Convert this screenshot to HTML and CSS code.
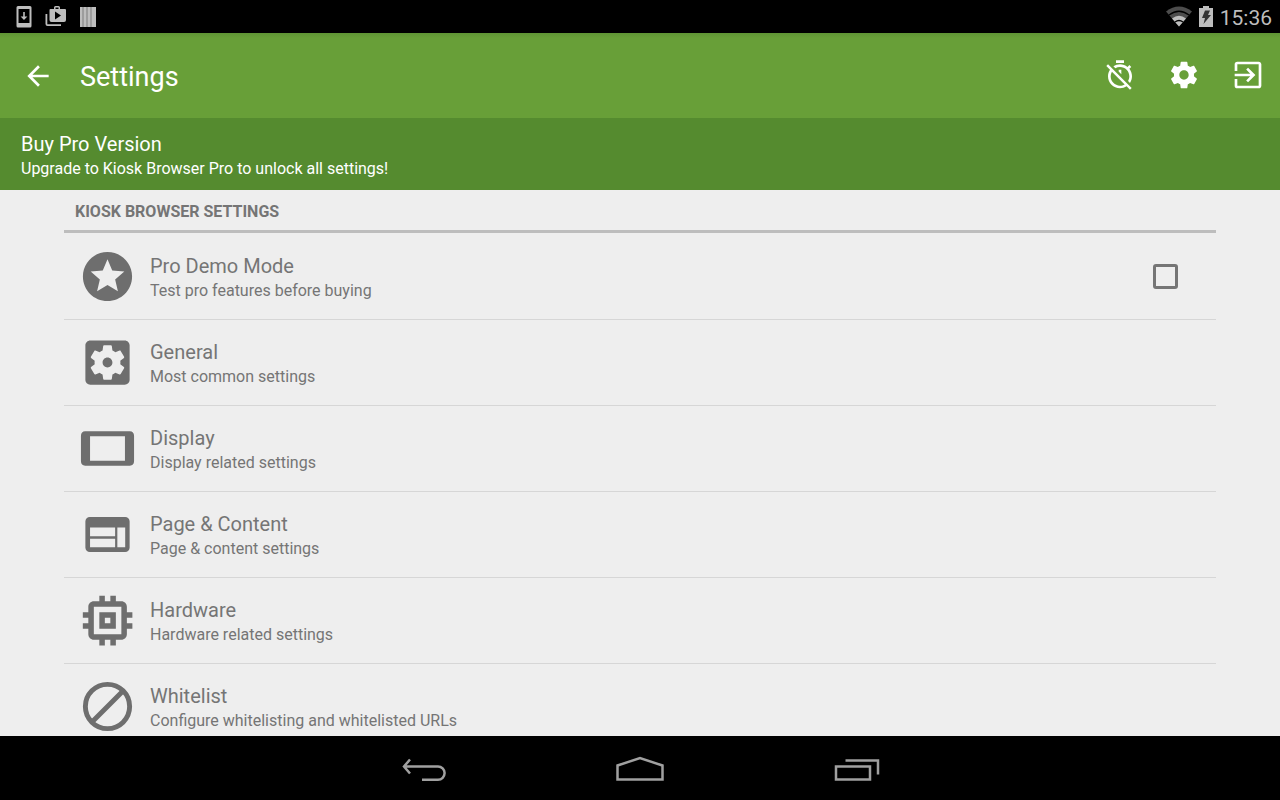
FILE: index.html
```html
<!DOCTYPE html>
<html lang="en">
<head>
    <meta charset="UTF-8">
    <meta name="viewport" content="width=device-width, initial-scale=1.0">
    <title>Settings</title>
    <link rel="stylesheet" href="styles.css">
</head>
<body>
    <div class="status-bar">
        <div class="status-icons">
            <svg width="16" height="22" viewBox="0 0 16 22">
                <path fill-rule="evenodd" d="M2 0h12a1.5 1.5 0 0 1 1.500 1.500v18.500a1.500 1.500 0 0 1-1.500 1.500H2A1.500 1.500 0 0 1 .5 20V1.500A1.500 1.500 0 0 1 2 0zM2.500 3v14h11V3z"/>
                <path d="M7.200 6h1.600v4.500h2.600L8 14l-3.400-3.500h2.600z"/>
            </svg>
            <svg width="22" height="22" viewBox="0 0 22 22">
                <path fill-rule="evenodd" d="M5.500 3H9V1.500Q9 0 10.500 0h3Q15 0 15 1.500V3h5q1 0 1 1v10q0 2-2 2H6.500q-2 0-2-2V4q0-1 1-1zm5-1.500V3h3V1.500zM10 5.500v8l6-4z"/>
                <path d="M.5 8h1.800v10.300H16V20H2.500q-2 0-2-2z"/>
            </svg>
            <svg width="16" height="22" viewBox="0 0 16 22">
                <path fill="#7d7d7d" d="M0 1h16v20H0z"/>
                <path d="M0 1h2.500v20H0zM3.500 1h3v20h-3zM7.500 1h3v20h-3zM11.500 1h4.500v20h-4.500z"/>
            </svg>
        </div>
        <div class="status-system">
            <svg width="26" height="22" viewBox="0 0 26 22">
                <path fill="#4d4d4d" d="M0 5.500Q13-4.500 26 5.500L13 20.500z"/>
                <path d="M6 12.500q7-5.500 14 0l-7 8z"/>
                <path fill="none" stroke="#000" stroke-width="1.300" d="M3 9q10-7.500 20 0M9 16q4-3 8 0"/>
            </svg>
            <svg width="14" height="22" viewBox="0 0 14 22">
                <path d="M4 0h6v2h4v19H0V2h4z"/>
                <path fill="#333" d="M6 4.500h5L9 9h3l-7.500 9L6 12H3z"/>
            </svg>
            <span class="clock">15:36</span>
        </div>
    </div>

    <header class="toolbar">
        <button class="back" type="button" aria-label="Back">
            <svg viewBox="0 0 24 24"><path d="M20 11H7.830l5.590-5.590L12 4l-8 8 8 8 1.410-1.410L7.830 13H20v-2z"/></svg>
        </button>
        <h1>Settings</h1>
        <div class="actions">
            <button type="button" aria-label="Timer off">
                <svg viewBox="0 0 24 24"><path d="M19.040 4.550l-1.420 1.420C16.070 4.740 14.120 4 12 4c-1.830 0-3.530.55-4.950 1.480l1.460 1.460C9.530 6.350 10.730 6 12 6c3.870 0 7 3.130 7 7 0 1.270-.35 2.470-.94 3.490l1.450 1.450C20.450 16.530 21 14.830 21 13c0-2.120-.74-4.070-1.970-5.610l1.420-1.420-1.410-1.420zM15 1H9v2h6V1zm-4 8.440l2 2V8h-2v1.440zM3.020 4L1.750 5.270 4.500 8.030C3.550 9.450 3 11.160 3 13c0 4.970 4.020 9 9 9 1.840 0 3.550-.55 4.980-1.500l2.500 2.500 1.270-1.270-7.710-7.710L3.020 4zM12 20c-3.870 0-7-3.130-7-7 0-1.280.35-2.480.95-3.520l9.560 9.560c-1.030.61-2.230.96-3.510.96z"/></svg>
            </button>
            <button type="button" aria-label="Settings">
                <svg viewBox="0 0 24 24"><path d="M19.430 12.980c.04-.32.07-.64.07-.98s-.03-.66-.07-.98l2.110-1.650c.19-.15.24-.42.12-.64l-2-3.460c-.12-.22-.39-.3-.61-.22l-2.490 1c-.52-.4-1.080-.73-1.690-.98l-.38-2.650C14.460 2.180 14.250 2 14 2h-4c-.25 0-.46.18-.49.42l-.38 2.650c-.61.25-1.170.59-1.690.98l-2.490-1c-.23-.09-.49 0-.61.22l-2 3.460c-.13.22-.07.49.12.64l2.110 1.650c-.04.32-.07.65-.07.98s.03.66.07.98l-2.110 1.650c-.19.15-.24.42-.12.64l2 3.460c.12.22.39.3.61.22l2.490-1c.52.4 1.080.73 1.690.98l.38 2.650c.03.24.24.42.49.42h4c.25 0 .46-.18.49-.42l.38-2.650c.61-.25 1.170-.59 1.690-.98l2.490 1c.23.09.49 0 .61-.22l2-3.460c.12-.22.07-.49-.12-.64l-2.110-1.650zM12 15.500c-1.930 0-3.500-1.570-3.500-3.500s1.570-3.500 3.500-3.500 3.500 1.570 3.500 3.500-1.570 3.500-3.500 3.500z"/></svg>
            </button>
            <button type="button" aria-label="Exit">
                <svg viewBox="0 0 24 24"><path d="M10.640 16.090L12.050 17.500l5.500-5.500-5.500-5.500-1.410 1.410L13.670 11H2v2h11.670zM20 2H4a2 2 0 0 0-2 2v5h2V4h16v16H4v-5H2v5a2 2 0 0 0 2 2h16c1.100 0 2-.9 2-2V4c0-1.100-.9-2-2-2z"/></svg>
            </button>
        </div>
    </header>

    <a class="banner" href="#">
        <span class="title">Buy Pro Version</span>
        <span class="summary">Upgrade to Kiosk Browser Pro to unlock all settings!</span>
    </a>

    <main>
        <h2>Kiosk Browser Settings</h2>
        <ul class="settings">
            <li>
                <label class="row" for="demoMode">
                    <svg viewBox="0 0 24 24"><path d="M11.990 2C6.470 2 2 6.480 2 12s4.470 10 9.990 10C17.520 22 22 17.520 22 12S17.520 2 11.990 2zm4.240 16L12 15.450 7.770 18l1.120-4.810-3.730-3.230 4.920-.42L12 5l1.920 4.530 4.920.42-3.730 3.230L16.230 18z"/></svg>
                    <span class="text">
                        <span class="title">Pro Demo Mode</span>
                        <span class="summary">Test pro features before buying</span>
                    </span>
                    <input id="demoMode" type="checkbox">
                </label>
            </li>
            <li>
                <a class="row" href="#">
                    <svg viewBox="0 0 24 24"><path d="M12 10c-1.100 0-2 .9-2 2s.9 2 2 2 2-.9 2-2-.9-2-2-2zm7-7H5c-1.110 0-2 .9-2 2v14c0 1.100.89 2 2 2h14c1.110 0 2-.9 2-2V5c0-1.100-.89-2-2-2zm-1.750 9c0 .23-.02.46-.05.68l1.480 1.160c.13.11.17.3.08.45l-1.400 2.420c-.09.15-.27.21-.43.15l-1.740-.7c-.36.28-.76.51-1.180.69l-.26 1.850c-.03.17-.18.3-.35.3h-2.800c-.17 0-.32-.13-.35-.29l-.26-1.850c-.43-.18-.82-.41-1.180-.69l-1.740.7c-.16.06-.34 0-.43-.15l-1.400-2.420c-.09-.15-.05-.34.08-.45l1.480-1.160c-.03-.23-.05-.46-.05-.69s.02-.46.05-.68l-1.480-1.160c-.13-.11-.17-.3-.08-.45l1.400-2.420c.09-.15.27-.21.43-.15l1.740.7c.36-.28.76-.51 1.180-.69l.26-1.850c.03-.17.18-.3.35-.3h2.800c.17 0 .32.13.35.29l.26 1.850c.43.18.82.41 1.180.69l1.740-.7c.16-.06.34 0 .43.15l1.400 2.420c.09.15.05.34-.08.45l-1.480 1.160c.03.23.05.46.05.69z"/></svg>
                    <span class="text">
                        <span class="title">General</span>
                        <span class="summary">Most common settings</span>
                    </span>
                </a>
            </li>
            <li>
                <a class="row" href="#">
                    <svg viewBox="0 0 24 24"><path fill-rule="evenodd" d="M2.900 5h18.200a1.800 1.800 0 0 1 1.700 1.700v10.600a1.800 1.800 0 0 1-1.700 1.700H2.900a1.800 1.800 0 0 1-1.700-1.700V6.700A1.800 1.800 0 0 1 2.900 5zM4.900 7v10h14.200V7z"/></svg>
                    <span class="text">
                        <span class="title">Display</span>
                        <span class="summary">Display related settings</span>
                    </span>
                </a>
            </li>
            <li>
                <a class="row" href="#">
                    <svg viewBox="0 0 24 24"><path fill-rule="evenodd" d="M4.800 4.900h14.400A1.800 1.800 0 0 1 21 6.700v10.600a1.800 1.800 0 0 1-1.800 1.800H4.800A1.800 1.800 0 0 1 3 17.300V6.700A1.800 1.800 0 0 1 4.800 4.900zM4.900 9.200v3.500h10.200V9.200zM4.900 13.700v3.500h10.200v-3.500zM16 9.200v8h3.200v-8z"/></svg>
                    <span class="text">
                        <span class="title">Page &amp; Content</span>
                        <span class="summary">Page &amp; content settings</span>
                    </span>
                </a>
            </li>
            <li>
                <a class="row" href="#">
                    <svg viewBox="0 0 24 24"><path transform="translate(-1.400 -1.400) scale(1.120)" d="M15 9H9v6h6V9zm-2 4h-2v-2h2v2zm8-2V9h-2V7c0-1.100-.9-2-2-2h-2V3h-2v2h-2V3H9v2H7c-1.100 0-2 .9-2 2v2H3v2h2v2H3v2h2v2c0 1.100.9 2 2 2h2v2h2v-2h2v2h2v-2h2c1.100 0 2-.9 2-2v-2h2v-2h-2v-2h2zm-4 6H7V7h10v10z"/></svg>
                    <span class="text">
                        <span class="title">Hardware</span>
                        <span class="summary">Hardware related settings</span>
                    </span>
                </a>
            </li>
            <li>
                <a class="row" href="#">
                    <svg viewBox="0 0 24 24"><path fill="none" stroke="#6e6e6e" stroke-width="2" d="M12 3a9 9 0 1 0 0 18 9 9 0 0 0 0-18zM5.300 18.700L18.700 5.300"/></svg>
                    <span class="text">
                        <span class="title">Whitelist</span>
                        <span class="summary">Configure whitelisting and whitelisted URLs</span>
                    </span>
                </a>
            </li>
        </ul>
    </main>

    <nav class="nav-bar">
        <button type="button" aria-label="Back">
            <svg width="48" height="32" viewBox="0 0 48 32"><path d="M10 5.500L4 12.500l6 7M4 12.500h34a6.600 6.600 0 0 1 0 13.200H22"/></svg>
        </button>
        <button type="button" aria-label="Home">
            <svg width="48" height="32" viewBox="0 0 48 32"><path d="M1.500 25.500V11.500L24 4l22.500 7.500v14z"/></svg>
        </button>
        <button type="button" aria-label="Recent apps">
            <svg width="48" height="32" viewBox="0 0 48 32"><path d="M4 12.500h34v13H4zM13.500 6.500H46v14"/></svg>
        </button>
    </nav>
</body>
</html>
```
FILE: styles.css
```css
* {
    box-sizing: border-box;
}

body {
    font-family: Roboto, sans-serif;
    background: #eeeeee;
    color: #757575;
    margin: 0;
    height: 100vh;
    display: flex;
    flex-direction: column;
    overflow: hidden;
}

h1, h2, ul {
    margin: 0;
    padding: 0;
}

a {
    color: inherit;
    text-decoration: none;
}

button {
    background: none;
    border: none;
    padding: 0;
    display: flex;
    align-items: center;
    justify-content: center;
    cursor: pointer;
}

/* status bar */
.status-bar {
    background: #000000;
    flex: none;
    height: 33px;
    padding: 0 8px 0 16px;
    display: flex;
    align-items: center;
    justify-content: space-between;
}

.status-bar svg {
    fill: #bebebe;
}

.status-icons {
    display: flex;
    align-items: center;
    gap: 13px;
}

.status-system {
    display: flex;
    align-items: center;
    gap: 7px;
}

.clock {
    color: #bebebe;
    font-size: 21px;
    line-height: 32px;
    padding-top: 2px;
}

/* toolbar */
.toolbar {
    background: linear-gradient(#5f9434, #689f38 5px);
    flex: none;
    height: 85px;
    display: flex;
    align-items: center;
}

.toolbar svg {
    width: 32px;
    height: 32px;
    fill: #ffffff;
}

.toolbar button {
    width: 64px;
    height: 64px;
}

.toolbar .back {
    width: 76px;
}

h1 {
    flex: 1;
    color: #ffffff;
    font-size: 27px;
    font-weight: 400;
    line-height: 32px;
    padding: 2px 0 0 4px;
}

.actions {
    display: flex;
    padding-bottom: 1px;
}

/* pro banner */
.banner {
    background: #558b2f;
    color: #ffffff;
    flex: none;
    height: 72px;
    padding: 4px 21px 0;
    display: flex;
    flex-direction: column;
    justify-content: center;
}

.title,
.summary {
    display: block;
}

.title {
    font-size: 20px;
    line-height: 26px;
}

.summary {
    font-size: 16px;
    line-height: 24px;
}

/* settings list */
main {
    flex: 1;
    min-height: 0;
    padding: 0 5%;
    overflow: hidden;
}

h2 {
    border-bottom: 3px solid #bdbdbd;
    font-size: 16px;
    font-weight: 700;
    line-height: 36px;
    margin-bottom: 1px;
    padding: 4px 11px 0;
    text-transform: uppercase;
}

.settings {
    list-style: none;
}

.settings li {
    border-bottom: 1px solid #d6d6d6;
}

.row {
    height: 85px;
    padding: 0 38px 0 13px;
    display: flex;
    align-items: center;
    cursor: pointer;
}

.row svg {
    width: 61px;
    height: 59px;
    fill: #6e6e6e;
    flex: none;
}

.text {
    flex: 1;
    padding: 2px 0 0 12px;
}

.row input {
    appearance: none;
    width: 25px;
    height: 25px;
    margin: 0;
    border: 3px solid #757575;
    border-radius: 3px;
}

.row input:checked {
    background: #689f38;
}

/* navigation bar */
.nav-bar {
    background: #000000;
    flex: none;
    height: 64px;
    padding-top: 4px;
    display: flex;
    justify-content: center;
}

.nav-bar button {
    width: 216px;
}

.nav-bar svg {
    fill: none;
    stroke: #a0a0a0;
    stroke-width: 2.5;
}
```
